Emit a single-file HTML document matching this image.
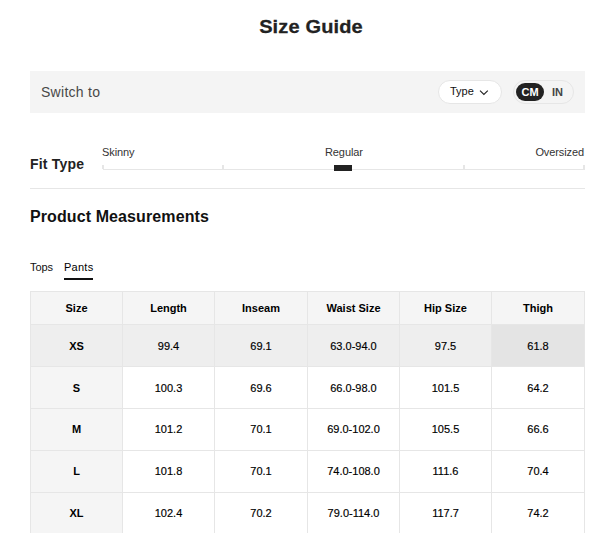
<!DOCTYPE html>
<html><head><meta charset="utf-8">
<style>
*{box-sizing:border-box;margin:0;padding:0}
html,body{width:603px;height:533px;overflow:hidden;background:#fff}
body{font-family:"Liberation Sans",sans-serif;color:#222;position:relative}
.abs{position:absolute;white-space:nowrap}
#title{left:0;width:603px;top:15px;text-align:center;font-size:20px;font-weight:700;line-height:24px;color:#222;padding-left:19px;transform:scaleY(0.89);letter-spacing:0.15px;-webkit-text-stroke:0.3px #222}
#switch{left:30px;top:71px;width:555px;height:42px;background:#f4f4f4}
#switchtxt{left:11px;top:13px;font-size:14px;line-height:16px;color:#484848;letter-spacing:0.28px}
#typepill{left:408px;top:9px;width:64px;height:24px;border:1px solid #e6e6e6;border-radius:12px;background:#fff}
#typetxt{left:11px;top:3px;font-size:11px;line-height:14px;color:#111}
#unit{left:483px;top:9px;width:61px;height:24px;border:1px solid #e6e6e6;border-radius:12px}
#cm{left:2px;top:2px;width:28px;height:18px;border-radius:9px;background:#222;color:#fff;font-size:11px;font-weight:700;line-height:18px;text-align:center}
#in{left:38px;top:2px;font-size:11px;font-weight:700;line-height:18px;color:#444}
#fit{left:30px;top:156px;font-size:14px;font-weight:700;line-height:16px;color:#222;letter-spacing:0.2px}
.lab{font-size:11px;line-height:13px;color:#333;letter-spacing:-0.1px}
#track{left:103px;top:169px;width:482px;height:1px;background:#e6e6e6}
.tick{position:absolute;top:165px;width:2px;height:4px;background:#e6e6e6}
#marker{left:334px;top:165px;width:18px;height:6px;background:#222}
#sep{left:30px;top:188px;width:555px;height:1px;background:#e6e6e6}
#pm{left:30px;top:208px;letter-spacing:0.1px;font-size:16px;font-weight:700;line-height:18px;color:#111}
#tops{left:30px;top:261px;font-size:11px;line-height:13px;color:#111;letter-spacing:-0.1px}
#pants{left:64px;top:261px;font-size:11px;line-height:13px;color:#000;letter-spacing:0.25px}
#uline{left:64px;top:278px;width:29px;height:2px;background:#111}
table{position:absolute;left:30px;top:291px;width:555px;border-collapse:collapse;table-layout:fixed}
td,th{border:1px solid #e6e6e6;text-align:center;font-size:11px;color:#000;padding:0}
th{height:33px;background:#f5f5f5;font-weight:700}
td{height:42px;background:#fff;-webkit-text-stroke:0.16px #000}
td:first-child{-webkit-text-stroke:0}
td:first-child{background:#f5f5f5;font-weight:700}
tr.up td{padding-bottom:2px}
tr.hov td{background:#eeeeee}
tr.hov td.hc{background:#e4e4e4}
</style></head><body>
<div id="title" class="abs">Size Guide</div>
<div id="switch" class="abs">
  <div id="switchtxt" class="abs">Switch to</div>
  <div id="typepill" class="abs"><div id="typetxt" class="abs">Type</div>
    <svg class="abs" style="left:40px;top:8px" width="10" height="7" viewBox="0 0 10 7"><path d="M1 1.6 L4.9 5.4 L8.8 1.6" fill="none" stroke="#222" stroke-width="1.15"/></svg>
  </div>
  <div id="unit" class="abs"><div id="cm" class="abs">CM</div><div id="in" class="abs">IN</div></div>
</div>
<div id="fit" class="abs">Fit Type</div>
<div class="abs lab" style="left:102px;top:146px">Skinny</div>
<div class="abs lab" style="left:325px;top:146px">Regular</div>
<div class="abs lab" style="right:19px;top:146px">Oversized</div>
<div id="track" class="abs"></div>
<div class="tick" style="left:102px"></div>
<div class="tick" style="left:222px"></div>
<div class="tick" style="left:463px"></div>
<div class="tick" style="left:583px"></div>
<div id="marker" class="abs"></div>
<div id="sep" class="abs"></div>
<div id="pm" class="abs">Product Measurements</div>
<div id="tops" class="abs">Tops</div>
<div id="pants" class="abs">Pants</div>
<div id="uline" class="abs"></div>
<table>
<colgroup><col style="width:92px"><col style="width:92px"><col style="width:93px"><col style="width:92px"><col style="width:92px"><col style="width:93px"></colgroup>
<tr><th>Size</th><th>Length</th><th>Inseam</th><th>Waist Size</th><th>Hip Size</th><th>Thigh</th></tr>
<tr class="hov"><td>XS</td><td>99.4</td><td>69.1</td><td>63.0-94.0</td><td>97.5</td><td class="hc">61.8</td></tr>
<tr><td>S</td><td>100.3</td><td>69.6</td><td>66.0-98.0</td><td>101.5</td><td>64.2</td></tr>
<tr class="up"><td>M</td><td>101.2</td><td>70.1</td><td>69.0-102.0</td><td>105.5</td><td>66.6</td></tr>
<tr class="up"><td>L</td><td>101.8</td><td>70.1</td><td>74.0-108.0</td><td>111.6</td><td>70.4</td></tr>
<tr class="up"><td>XL</td><td>102.4</td><td>70.2</td><td>79.0-114.0</td><td>117.7</td><td>74.2</td></tr>
</table>
</body></html>
